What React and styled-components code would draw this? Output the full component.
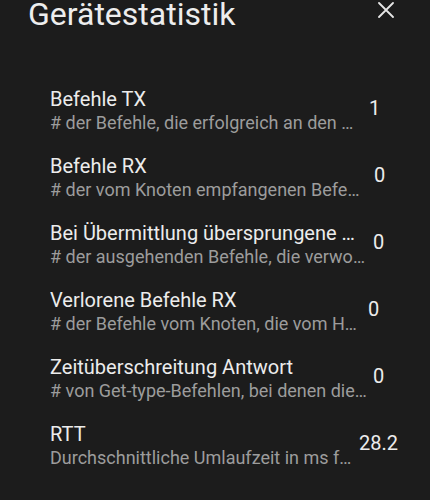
import React from 'react'
import styled, { createGlobalStyle } from 'styled-components'

const GlobalStyle = createGlobalStyle`
  html, body {
    margin: 0;
    padding: 0;
    background: #1c1c1c;
  }
  body {
    font-family: Roboto, 'Noto Sans', sans-serif;
    -webkit-font-smoothing: antialiased;
  }
`

// width = room the texts get before the value, shift = gap before the value
const stats = [
  { title: 'Befehle TX', desc: '# der Befehle, die erfolgreich an den Knoten gesendet wurden', value: '1', width: 310, shift: 9 },
  { title: 'Befehle RX', desc: '# der vom Knoten empfangenen Befehle', value: '0', width: 316, shift: 8 },
  { title: 'Bei Übermittlung übersprungene Befehle', desc: '# der ausgehenden Befehle, die verworfen wurden', value: '0', width: 316, shift: 7 },
  { title: 'Verlorene Befehle RX', desc: '# der Befehle vom Knoten, die vom Host verworfen wurden', value: '0', width: 316, shift: 2 },
  { title: 'Zeitüberschreitung Antwort', desc: '# von Get-type-Befehlen, bei denen die Antwort ausblieb', value: '0', width: 318, shift: 5 },
  { title: 'RTT', desc: 'Durchschnittliche Umlaufzeit in ms für Befehle', value: '28.2', width: 306, shift: 3 },
]

const Gerätestatistik = () => {
  return (
    <>
      <GlobalStyle />
      <Page>
        <Header>
          <Heading>Gerätestatistik</Heading>
          <CloseButton aria-label='Schließen'>
            <svg width='16' height='16' viewBox='0 0 16 16'>
              <path d='M1 1 L15 15 M15 1 L1 15' stroke='#e6e6e6' strokeWidth='1.8' strokeLinecap='round' />
            </svg>
          </CloseButton>
        </Header>

        <List>
          {stats.map((s) => (
            <Row key={s.title}>
              <Texts $width={s.width}>
                <Title>{s.title}</Title>
                <Desc>{s.desc}</Desc>
              </Texts>
              <Value $shift={s.shift}>{s.value}</Value>
            </Row>
          ))}
        </List>
      </Page>
    </>
  )
}

const Page = styled.div`
  width: 430px;
  height: 500px;
  background: #1c1c1c;
  overflow: hidden;
`

const Header = styled.div`
  display: flex;
  justify-content: space-between;
  align-items: flex-start;
  padding: 0 36px 0 28px;
  height: 28px;
`

const Heading = styled.div`
  font-size: 32px;
  line-height: 28px;
  color: #ededed;
  font-weight: 400;
`

const CloseButton = styled.div`
  display: flex;
  padding-top: 2px;
`

const List = styled.div`
  display: flex;
  flex-direction: column;
  gap: 19px;
  margin-top: 59px;
  padding-left: 50px;
`

const Row = styled.div`
  display: flex;
  align-items: flex-start;
  height: 48px;
`

const Texts = styled.div`
  width: ${(p) => p.$width}px;
  flex: 0 0 ${(p) => p.$width}px;
  display: flex;
  flex-direction: column;
  min-width: 0;
`

const Title = styled.div`
  font-size: 20px;
  line-height: 24px;
  color: #ececec;
  white-space: nowrap;
  overflow: hidden;
  text-overflow: ellipsis;
`

const Desc = styled.div`
  font-size: 18px;
  line-height: 24px;
  color: #9c9c9c;
  white-space: nowrap;
  overflow: hidden;
  text-overflow: ellipsis;
`

const Value = styled.div`
  font-size: 20px;
  line-height: 24px;
  color: #ececec;
  margin-top: 9px;
  margin-left: ${(p) => p.$shift}px;
  white-space: nowrap;
`

export default Gerätestatistik
